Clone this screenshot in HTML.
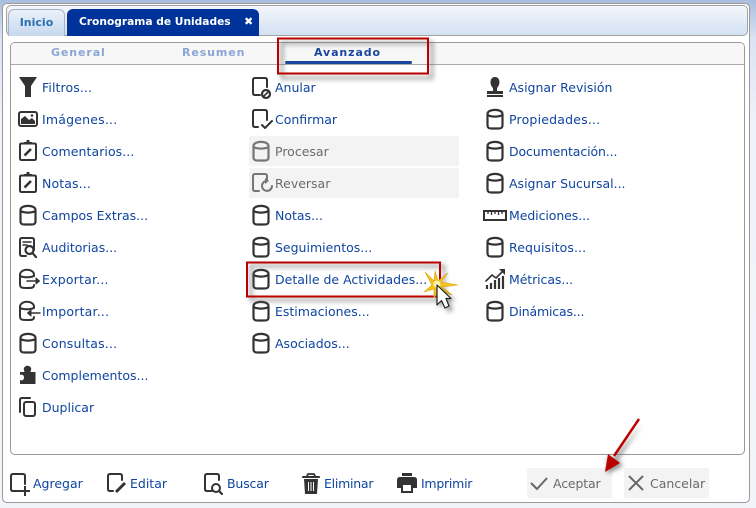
<!DOCTYPE html>
<html><head><meta charset="utf-8"><style>
html,body{margin:0;padding:0}
body{width:756px;height:508px;overflow:hidden;position:relative;background:linear-gradient(#a9bedf 0,#dbe4f3 40px,#eef2fa 120px,#f1f4fb 100%);font-family:"DejaVu Sans",Verdana,sans-serif}
div{position:absolute;box-sizing:border-box}
.t{font-size:12.5px;line-height:16px;color:#0f45a0;white-space:nowrap;height:16px}
.g{color:#6b6b6b}
.h{font-size:11px;font-weight:bold;letter-spacing:.9px;line-height:14px;white-space:nowrap;color:#8ba6d6}
svg{position:absolute;left:0;top:0}
</style></head><body>
<div style="left:2px;top:3px;width:748px;height:500px;background:#fff;border:1px solid #9a9a9a;border-radius:5px"></div>
<div style="left:6px;top:5px;width:742px;height:31px;background:linear-gradient(#f3f7fc,#d3e1f2);border:1px solid #a2a2a2;border-radius:5px"></div>
<div style="left:8px;top:9px;width:57px;height:27px;background:linear-gradient(#eaf1f9,#c6d9ee);border:1px solid #a9b3bf;border-bottom:0;border-radius:6px 6px 0 0;color:#2c6fb0;font-size:11px;font-weight:bold;line-height:26px;text-align:center">Inicio</div>
<div style="left:67px;top:9px;width:192px;height:27px;background:#003399;border-radius:6px 6px 0 0;color:#fff;font-size:10.65px;font-weight:bold;line-height:26px;padding-left:12px;white-space:nowrap">Cronograma de Unidades</div>

<div style="left:10px;top:42px;width:735px;height:413px;background:#fff;border:1px solid #9a9a9a;border-radius:5px"></div>
<div style="left:11px;top:43px;width:733px;height:22px;background:#f7f7f7;border-bottom:1px solid #a9a9a9;border-radius:4px 4px 0 0"></div>
<div class="h" style="left:51px;top:46px">General</div>
<div class="h" style="left:182px;top:46px">Resumen</div>
<div class="h" style="left:314px;top:46px;color:#1a469c">Avanzado</div>
<div style="left:285px;top:61px;width:127px;height:3px;background:#1a469c;border-radius:2px"></div>

<div style="left:249px;top:136px;width:210px;height:30px;background:#f3f3f3;border-radius:2px"></div>
<div style="left:249px;top:168px;width:210px;height:30px;background:#f3f3f3;border-radius:2px"></div>
<div style="left:527px;top:468px;width:85px;height:30px;background:#f3f3f3;border-radius:2px"></div>
<div style="left:624px;top:468px;width:85px;height:30px;background:#f3f3f3;border-radius:2px"></div>

<div class="t" style="left:42px;top:80px;letter-spacing:.1px">Filtros...</div>
<div class="t" style="left:42px;top:112px;letter-spacing:.2px">Imágenes...</div>
<div class="t" style="left:42px;top:144px;letter-spacing:.07px">Comentarios...</div>
<div class="t" style="left:42px;top:176px;letter-spacing:.12px">Notas...</div>
<div class="t" style="left:42px;top:208px">Campos Extras...</div>
<div class="t" style="left:42px;top:240px">Auditorias...</div>
<div class="t" style="left:42px;top:272px;letter-spacing:.2px">Exportar...</div>
<div class="t" style="left:42px;top:304px;letter-spacing:.2px">Importar...</div>
<div class="t" style="left:42px;top:336px;letter-spacing:.17px">Consultas...</div>
<div class="t" style="left:42px;top:368px">Complementos...</div>
<div class="t" style="left:42px;top:400px">Duplicar</div>

<div class="t" style="left:275px;top:80px">Anular</div>
<div class="t" style="left:275px;top:112px">Confirmar</div>
<div class="t g" style="left:275px;top:144px">Procesar</div>
<div class="t g" style="left:275px;top:176px">Reversar</div>
<div class="t" style="left:275px;top:208px">Notas...</div>
<div class="t" style="left:275px;top:240px">Seguimientos...</div>
<div class="t" style="left:275px;top:272px">Detalle de Actividades...</div>
<div class="t" style="left:275px;top:304px">Estimaciones...</div>
<div class="t" style="left:275px;top:336px">Asociados...</div>

<div class="t" style="left:509px;top:80px">Asignar Revisión</div>
<div class="t" style="left:509px;top:112px;letter-spacing:.2px">Propiedades...</div>
<div class="t" style="left:509px;top:144px;letter-spacing:-.12px">Documentación...</div>
<div class="t" style="left:509px;top:176px">Asignar Sucursal...</div>
<div class="t" style="left:509px;top:208px;letter-spacing:-.08px">Mediciones...</div>
<div class="t" style="left:509px;top:240px;letter-spacing:.08px">Requisitos...</div>
<div class="t" style="left:509px;top:272px;letter-spacing:-.09px">Métricas...</div>
<div class="t" style="left:509px;top:304px;letter-spacing:-.17px">Dinámicas...</div>

<div class="t" style="left:33px;top:476px">Agregar</div>
<div class="t" style="left:130px;top:476px">Editar</div>
<div class="t" style="left:227px;top:476px;letter-spacing:-.15px">Buscar</div>
<div class="t" style="left:324px;top:476px;letter-spacing:-.25px">Eliminar</div>
<div class="t" style="left:421px;top:476px;letter-spacing:-.25px">Imprimir</div>
<div class="t g" style="left:553px;top:476px;letter-spacing:-.14px">Aceptar</div>
<div class="t g" style="left:650px;top:476px">Cancelar</div>

<svg width="756" height="508" viewBox="0 0 756 508" fill="none" stroke="#333" stroke-width="2" stroke-linejoin="round" stroke-linecap="round">
<defs>
<g id="db"><path d="M-7.500-5C-7.500-10.500 7.500-10.500 7.500-5V6C7.500 9 6 9.500 3 9.500H-3C-6 9.500-7.500 9-7.500 6ZM-7.500-5C-7.500-1.500 7.500-1.500 7.500-5" stroke-width="2.200"/></g>
<g id="clip"><path d="M-4-7.500H-6.500Q-8-7.500-8-6V7.500Q-8 9-6.500 9H6.500Q8 9 8 7.500V-6Q8-7.500 6.500-7.500H4" stroke-width="2"/><path d="M-4-9H-1.500V-11H1.500V-9H4V-6.500H-4Z" fill="#333" stroke="none"/><path d="M-3.500 4.500L3-2" stroke-width="2.600" stroke-linecap="butt"/></g>
<filter id="sh" x="-30%" y="-30%" width="160%" height="160%"><feGaussianBlur stdDeviation="2.500"/></filter>
</defs>
<!-- col 1 -->
<path d="M19 77H37L31 86V97H25V86Z" fill="#333" stroke="none"/>
<rect x="19" y="112" width="18" height="14" rx="2"/><path d="M21 124V119L25 116L29 120L32 118L35 121V124Z" fill="#333" stroke="none"/><circle cx="32" cy="115.500" r="1.300" fill="#333" stroke="none"/>
<use href="#clip" x="28" y="151"/><use href="#clip" x="28" y="183"/>
<use href="#db" x="28" y="215"/>
<path d="M34 250V240Q34 238 32 238H22Q20 238 20 240V254Q20 256 22 256H26" stroke-width="2"/><path d="M23 242H31M23 245H27" stroke-width="1.500"/><circle cx="29.500" cy="250" r="4" stroke-width="2.200"/><path d="M32.500 253L36 257" stroke-width="2.200"/>
<path d="M34 276V275C34 268 20 268 20 275V284C20 288 22 288 27 288C32 288 34 288 34 285M20 275C20 278 34 278 34 275" stroke-width="2"/><path d="M27 281H38" stroke-width="1.500"/><path d="M36 278L39.500 281L36 284Z" fill="#333" stroke-width="1"/>
<path d="M34 308V307C34 300 20 300 20 307V316C20 320 22 320 27 320C32 320 34 320 34 317M20 307C20 310 34 310 34 307" stroke-width="2"/><path d="M29 313H40" stroke-width="1.500"/><path d="M31 310L27.500 313L31 316Z" fill="#333" stroke-width="1"/>
<use href="#db" x="28" y="343"/>
<path d="M20 372H24.500C24 370 23.500 369 24 368C25 365 30 365 31 368C31.500 369 31 370 30.500 372H35.500V384H20V380C22 381 24 380 24 377.500C24 375 22 374 20 375Z" fill="#333" stroke="none"/>
<path d="M30 398H22Q20 398 20 400V412" stroke-width="2"/><rect x="24" y="402" width="11" height="14" rx="2" stroke-width="2"/>
<!-- col 2 -->
<path d="M260 95H255Q253 95 253 93V80Q253 78 255 78H265Q267 78 267 80V87"/><circle cx="266" cy="94" r="4" stroke-width="2.200"/><path d="M263.500 96.500L268.500 91.500" stroke-width="1.600"/>
<path d="M258 127H255Q253 127 253 125V112Q253 110 255 110H265Q267 110 267 112V120"/><path d="M262 125L265 128L272 121"/>
<use href="#db" x="261" y="151" opacity=".65"/>
<g opacity=".65"><path d="M259 191H255Q253 191 253 189V176Q253 174 255 174H265Q267 174 267 176V180"/><path d="M272 186A5 5 0 1 1 266 181"/><path d="M265 178V184L269 181Z" fill="#333" stroke="none"/></g>
<use href="#db" x="261" y="215"/><use href="#db" x="261" y="247"/><use href="#db" x="261" y="279"/><use href="#db" x="261" y="311"/><use href="#db" x="261" y="343"/>
<!-- col 3 -->
<path d="M493 88C489 84 490 77 495 77C500 77 501 84 497 88V91H503V94H487V91H493Z" fill="#333" stroke="none"/><rect x="487" y="95" width="16" height="2" fill="#333" stroke="none"/>
<use href="#db" x="495" y="119"/><use href="#db" x="495" y="151"/><use href="#db" x="495" y="183"/><use href="#db" x="495" y="247"/><use href="#db" x="495" y="311"/>
<rect x="484" y="211" width="22" height="9" stroke-width="2" stroke-linejoin="miter"/><path d="M488 211V214M491.500 211V215M495 211V214M498.500 211V215M502 211V214" stroke-width="1.300" stroke-linecap="butt"/>
<path d="M487 289V285M491 289V283M495 289V280M499 289V278M503 289V276" stroke-width="2.200" stroke-linecap="butt"/><path d="M486 281L492 275L496 278L503 271" stroke-width="1.600"/><path d="M499 269H505V275Z" fill="#333" stroke="none"/>
<!-- toolbar -->
<path d="M20 491H13Q11 491 11 489V476Q11 474 13 474H23Q25 474 25 476V484"/><path d="M25 486V496M20 491H30" stroke-width="2" stroke-linecap="butt"/>
<path d="M113 491H110Q108 491 108 489V476Q108 474 110 474H120Q122 474 122 476V480"/><path d="M116 492L125 483" stroke-width="3" stroke-linecap="butt"/>
<path d="M212 491H207Q205 491 205 489V476Q205 474 207 474H217Q219 474 219 476V480"/><circle cx="216" cy="488" r="4" stroke-width="2"/><path d="M219 491L222 494" stroke-width="2.200"/>
<path d="M303 477H319" stroke-width="2"/><path d="M307 476L308 474H314L315 476" stroke-width="1.800"/><path d="M304 479H318L317 494H305Z" fill="#333" stroke="none"/><path d="M308.500 482V491M311 482V491M313.500 482V491" stroke="#fff" stroke-width="1" stroke-linecap="butt"/>
<rect x="402" y="473" width="10" height="3" fill="#333" stroke="none"/><path d="M400 477H414Q417 477 417 480V488H397V480Q397 477 400 477Z" fill="#333" stroke="none"/><rect x="402" y="484" width="10" height="8" fill="#fff" stroke-width="2" stroke-linejoin="miter"/>
<path d="M531 483L537 489L547 478" stroke="#666" stroke-linecap="butt"/>
<path d="M629 476L643 490M643 476L629 490" stroke="#666" stroke-linecap="butt"/>
<!-- red boxes shadows -->
<rect x="279" y="40" width="150" height="35" stroke="#666" stroke-width="3" filter="url(#sh)" opacity=".6" transform="translate(3 3)"/>
<rect x="248" y="263" width="193" height="34" stroke="#666" stroke-width="3" filter="url(#sh)" opacity=".6" transform="translate(3 3)"/>
<rect x="278" y="38.500" width="150" height="35" stroke="#bb0000" stroke-width="2" stroke-linejoin="miter"/>
<rect x="247" y="262.500" width="193" height="34" stroke="#bb0000" stroke-width="2" stroke-linejoin="miter"/>
<!-- arrow -->
<path d="M642 424L618 460L623 466L607 474L608 456L612 460Z" fill="#666" stroke="none" filter="url(#sh)" opacity=".7"/>
<path d="M605 472L608 454L620 463Z" stroke="none" fill="#bb0000"/><path d="M639 419L614 456" stroke="#bb0000" stroke-width="2.500" stroke-linecap="butt"/>
<!-- star -->
<path d="M435 271L438 281L448 273L441 282L458 285L442 287L452 295L439 290L434 298L434 289L424 292L432 285L425 272L434 281Z" fill="#f3c322" stroke="#d9a300" stroke-width=".6"/>
<circle cx="437" cy="284" r="3.500" fill="#fff3b0" stroke="none"/>
<path d="M437 286V306L442 301L446 310L451 308L447 299H454Z" fill="#555" stroke="none" filter="url(#sh)" opacity=".6" transform="translate(2 2)"/>
<path d="M437 285V305L441.500 300.500L445 308L449 306L446 298.500H451Z" fill="#fff" stroke="#222" stroke-width="1.200"/>
</svg>
<div style="left:244px;top:9px;width:10px;height:26px;color:#fff;font-size:11px;font-weight:bold;line-height:26px">✖</div>
</body></html>
